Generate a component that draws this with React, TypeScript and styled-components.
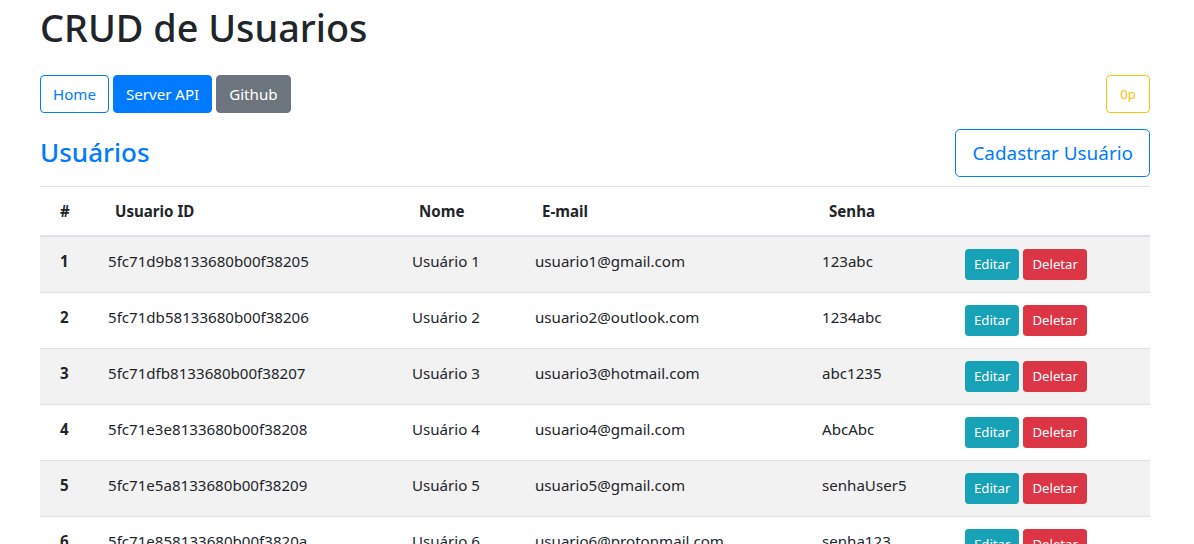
import React from "react";
import styled, { createGlobalStyle } from "styled-components";

const Global = createGlobalStyle`
  * { box-sizing: border-box; }
  body {
    margin: 0;
    background: #fff;
    color: #212529;
    font-family: "Noto Sans", "Open Sans", sans-serif;
    font-size: 15.1px;
    line-height: 24px;
  }
`;

const Container = styled.div`
  max-width: 1140px;
  margin: 0 auto;
  padding: 0 17px 0 13px;
`;

const Title = styled.h1`
  margin: 0;
  padding-top: 4px;
  font-size: 37.8px;
  font-weight: 500;
  line-height: 48px;
`;

const Nav = styled.nav`
  display: flex;
  align-items: center;
  gap: 4px;
  margin-top: 23px;
`;

const Spacer = styled.div`
  flex: 1;
`;

type Variant = "primary" | "secondary" | "warning" | "info" | "danger";
const colors: Record<Variant, string> = {
  primary: "#007bff",
  secondary: "#6c757d",
  warning: "#ffc107",
  info: "#17a2b8",
  danger: "#dc3545",
};

const Btn = styled.button<{ $v: Variant; $outline?: boolean; $size?: "sm" | "md" | "lg" }>`
  display: inline-block;
  font-family: inherit;
  font-weight: 400;
  cursor: pointer;
  border: 1px solid ${(p) => colors[p.$v]};
  background: ${(p) => (p.$outline ? "transparent" : colors[p.$v])};
  color: ${(p) => (p.$outline ? colors[p.$v] : "#fff")};
  font-size: ${(p) => (p.$size === "lg" ? "18.9px" : p.$size === "sm" ? "13.2px" : "15.1px")};
  line-height: ${(p) => (p.$size === "lg" ? "30px" : p.$size === "sm" ? "21px" : "24px")};
  height: ${(p) => (p.$size === "lg" ? "48px" : p.$size === "sm" ? "31px" : "38px")};
  padding: ${(p) => (p.$size === "lg" ? "0 16px" : p.$size === "sm" ? "0 8px" : "0 12px")};
  border-radius: ${(p) => (p.$size === "lg" ? "4.8px" : p.$size === "sm" ? "3.2px" : "4px")};
`;

const CounterBtn = styled(Btn)`
  font-size: 13px;
  width: 44px;
  padding: 0;
`;

const SectionHead = styled.div`
  display: flex;
  align-items: center;
  justify-content: space-between;
  margin-top: 16px;
  margin-bottom: 9px;
`;

const SectionTitle = styled.h3`
  margin: 0;
  color: #007bff;
  font-size: 26px;
  font-weight: 500;
  line-height: 1.2;
`;

const Table = styled.table`
  width: 100%;
  border-collapse: separate;
  border-spacing: 0;
  table-layout: fixed;
`;

const Th = styled.th<{ $first?: boolean }>`
  text-align: left;
  font-weight: 700;
  vertical-align: bottom;
  padding: 12px 12px 12px ${(p) => (p.$first ? "20px" : "19px")};
  border-top: 1px solid #dee2e6;
  border-bottom: 2px solid #dee2e6;
`;

const Tr = styled.tr<{ $striped: boolean }>`
  background: ${(p) => (p.$striped ? "#f2f2f2" : "transparent")};
`;

const Td = styled.td<{ $first?: boolean; $divider?: boolean }>`
  vertical-align: top;
  height: ${(p) => (p.$divider ? "56px" : "55px")};
  padding: 12px 12px 12px ${(p) => (p.$first ? "20px" : "12px")};
  border-top: ${(p) => (p.$divider ? "1px solid #dee2e6" : "none")};
  font-weight: ${(p) => (p.$first ? 700 : 400)};
  white-space: nowrap;
  overflow: hidden;
`;

const Actions = styled.div`
  display: flex;
  gap: 4px;
`;

const users = [
  ["5fc71d9b8133680b00f38205", "Usuário 1", "usuario1@gmail.com", "123abc"],
  ["5fc71db58133680b00f38206", "Usuário 2", "usuario2@outlook.com", "1234abc"],
  ["5fc71dfb8133680b00f38207", "Usuário 3", "usuario3@hotmail.com", "abc1235"],
  ["5fc71e3e8133680b00f38208", "Usuário 4", "usuario4@gmail.com", "AbcAbc"],
  ["5fc71e5a8133680b00f38209", "Usuário 5", "usuario5@gmail.com", "senhaUser5"],
  ["5fc71e858133680b00f3820a", "Usuário 6", "usuario6@protonmail.com", "senha123"],
];

export default function App() {
  return (
    <>
      <Global />
      <Container>
        <Title>CRUD de Usuarios</Title>
        <Nav>
          <Btn $v="primary" $outline>Home</Btn>
          <Btn $v="primary">Server API</Btn>
          <Btn $v="secondary">Github</Btn>
          <Spacer />
          <CounterBtn $v="warning" $outline>0p</CounterBtn>
        </Nav>
        <SectionHead>
          <SectionTitle>Usuários</SectionTitle>
          <Btn $v="primary" $outline $size="lg">Cadastrar Usuário</Btn>
        </SectionHead>
        <Table>
          <colgroup>
            <col style={{ width: 56 }} />
            <col style={{ width: 304 }} />
            <col style={{ width: 123 }} />
            <col style={{ width: 287 }} />
            <col style={{ width: 143 }} />
            <col />
          </colgroup>
          <thead>
            <tr>
              <Th $first>#</Th>
              <Th>Usuario ID</Th>
              <Th>Nome</Th>
              <Th>E-mail</Th>
              <Th>Senha</Th>
              <Th></Th>
            </tr>
          </thead>
          <tbody>
            {users.map((u, i) => {
              const d = i > 0;
              return (
                <Tr key={u[0]} $striped={i % 2 === 0}>
                  <Td $first $divider={d}>{i + 1}</Td>
                  <Td $divider={d}>{u[0]}</Td>
                  <Td $divider={d}>{u[1]}</Td>
                  <Td $divider={d}>{u[2]}</Td>
                  <Td $divider={d}>{u[3]}</Td>
                  <Td $divider={d}>
                    <Actions>
                      <Btn $v="info" $size="sm">Editar</Btn>
                      <Btn $v="danger" $size="sm">Deletar</Btn>
                    </Actions>
                  </Td>
                </Tr>
              );
            })}
          </tbody>
        </Table>
      </Container>
    </>
  );
}
